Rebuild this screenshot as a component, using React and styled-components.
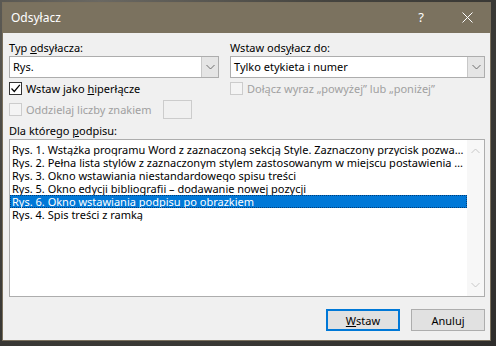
import React from 'react'
import styled, { createGlobalStyle } from 'styled-components'

const GlobalStyle = createGlobalStyle`
  html, body {
    margin: 0;
    padding: 0;
    background: #3b3a37;
  }
  body {
    font-family: "Noto Sans", "Liberation Sans", sans-serif;
    font-size: 11px;
    color: #000;
  }
`

const captions = [
  'Rys. 1. Wstążka programu Word z zaznaczoną sekcją Style. Zaznaczony przycisk pozwala otworzyć okno stylów',
  'Rys. 2. Pełna lista stylów z zaznaczonym stylem zastosowanym w miejscu postawienia kursora',
  'Rys. 3. Okno wstawiania niestandardowego spisu treści',
  'Rys. 5. Okno edycji bibliografii – dodawanie nowej pozycji',
  'Rys. 6. Okno wstawiania podpisu po obrazkiem',
  'Rys. 4. Spis treści z ramką',
]

function Chevron({ up, color = '#606060' }) {
  return (
    <svg width="9" height="6" viewBox="0 0 9 6">
      <path
        d={up ? 'M0.5 5 L4.5 1 L8.5 5' : 'M0.5 1 L4.5 5 L8.5 1'}
        fill="none"
        stroke={color}
        strokeWidth="0.9"
      />
    </svg>
  )
}

function Check() {
  return (
    <svg width="11" height="11" viewBox="0 0 11 11">
      <path d="M1.5 5.5 L4.3 8.5 L9.8 1.8" fill="none" stroke="#000" strokeWidth="1.2" />
    </svg>
  )
}

function App() {
  return (
    <Desktop>
      <GlobalStyle />
      <Window>
        <TitleBar>
          <Title>Odsyłacz</Title>
          <TitleButton>?</TitleButton>
          <TitleButton>
            <svg width="11" height="11" viewBox="0 0 11 11">
              <path d="M0.5 0.5 L10.5 10.5 M10.5 0.5 L0.5 10.5" stroke="#fff" strokeWidth="1" />
            </svg>
          </TitleButton>
        </TitleBar>
        <Body>
          <Columns>
            <Column>
              <Label>Typ <u>o</u>dsyłacza:</Label>
              <Select>
                <SelectValue>Rys.</SelectValue>
                <SelectArrow><Chevron /></SelectArrow>
              </Select>
              <CheckRow>
                <CheckBox><Check /></CheckBox>
                <span>Wstaw jako <u>h</u>iperłącze</span>
              </CheckRow>
              <CheckRow disabled>
                <CheckBox disabled />
                <span>Oddzielaj liczby znakiem</span>
                <SmallInput />
              </CheckRow>
            </Column>
            <Column>
              <Label>Wstaw ods<u>y</u>łacz do:</Label>
              <Select>
                <SelectValue>Tylko etykieta i numer</SelectValue>
                <SelectArrow><Chevron /></SelectArrow>
              </Select>
              <CheckRow disabled>
                <CheckBox disabled />
                <span>Dołącz wyraz „powyżej” lub „poniżej”</span>
              </CheckRow>
            </Column>
          </Columns>
          <ListLabel>Dla którego <u>p</u>odpisu:</ListLabel>
          <ListBox>
            <Rows>
              {captions.map((c, i) => (
                <Row key={i} selected={i === 4}>{c}</Row>
              ))}
            </Rows>
            <ScrollBar>
              <Chevron up color="#c2c2c2" />
              <Chevron color="#c2c2c2" />
            </ScrollBar>
          </ListBox>
          <Buttons>
            <Button primary><u>W</u>staw</Button>
            <Button>Anuluj</Button>
          </Buttons>
        </Body>
      </Window>
    </Desktop>
  )
}

const Desktop = styled.div`
  width: 496px;
  height: 346px;
  box-sizing: border-box;
  padding: 2px 5px 0 2px;
  background: radial-gradient(ellipse at 20% 0%, #6a6862 0%, #45443f 40%, #2e2d2b 100%);
  overflow: hidden;
`

const Window = styled.div`
  width: 489px;
  height: 339px;
  box-sizing: border-box;
  border: 1px solid #7a705d;
  display: flex;
  flex-direction: column;
  background: #f0f0f0;
`

const TitleBar = styled.div`
  height: 30px;
  flex: none;
  background: #7b725f;
  display: flex;
  align-items: center;
  color: #fff;
`

const Title = styled.div`
  flex: 1;
  padding-left: 8px;
  font-size: 12px;
  padding-bottom: 2px;
`

const TitleButton = styled.div`
  width: 46px;
  height: 30px;
  display: flex;
  align-items: center;
  justify-content: center;
  font-size: 13px;
  padding-bottom: 2px;
  box-sizing: border-box;
`

const Body = styled.div`
  flex: 1;
  display: flex;
  flex-direction: column;
  padding: 7px 5px 0 6px;
`

const Columns = styled.div`
  display: grid;
  grid-template-columns: 210px 1fr;
  column-gap: 11px;
`

const Column = styled.div`
  display: flex;
  flex-direction: column;
`

const Label = styled.div`
  height: 15px;
  line-height: 15px;
  margin-bottom: 1px;
`

const Select = styled.div`
  height: 22px;
  box-sizing: border-box;
  border: 1px solid #adadad;
  background: #fff;
  display: flex;
  align-items: stretch;
`

const SelectValue = styled.div`
  flex: 1;
  padding-left: 3px;
  line-height: 19px;
`

const SelectArrow = styled.div`
  width: 16px;
  border-left: 1px solid #c8c8c8;
  background: #e5e5e5;
  display: flex;
  align-items: center;
  justify-content: center;
`

const CheckRow = styled.div`
  display: flex;
  align-items: center;
  gap: 4px;
  height: 21px;
  color: ${p => (p.disabled ? '#a0a0a0' : '#000')};
`

const CheckBox = styled.div`
  width: 13px;
  height: 13px;
  box-sizing: border-box;
  border: 1px solid ${p => (p.disabled ? '#cccccc' : '#333333')};
  background: ${p => (p.disabled ? '#f4f4f4' : '#fff')};
  display: flex;
  align-items: center;
  justify-content: center;
  flex: none;
`

const SmallInput = styled.div`
  width: 29px;
  height: 19px;
  box-sizing: border-box;
  border: 1px solid #cccccc;
  background: #f0f0f0;
  margin-left: auto;
  margin-right: 27px;
`

const ListLabel = styled.div`
  height: 15px;
  line-height: 15px;
  margin-top: 3px;
  margin-bottom: 1px;
`

const ListBox = styled.div`
  height: 158px;
  box-sizing: border-box;
  border: 1px solid #adadad;
  background: #fff;
  display: flex;
`

const Rows = styled.div`
  flex: 1;
  min-width: 0;
  padding-top: 3px;
`

const Row = styled.div`
  height: 13px;
  line-height: 13px;
  padding-left: 2px;
  padding-right: 1px;
  white-space: nowrap;
  overflow: hidden;
  text-overflow: ellipsis;
  box-sizing: border-box;
  background: ${p => (p.selected ? '#0078d7' : 'transparent')};
  color: ${p => (p.selected ? '#fff' : '#000')};
  outline: ${p => (p.selected ? '1px dotted #003e78' : 'none')};
  outline-offset: -1px;
`

const ScrollBar = styled.div`
  width: 17px;
  flex: none;
  background: #f7f7f7;
  display: flex;
  flex-direction: column;
  justify-content: space-between;
  align-items: center;
  padding: 8px 0 8px;
  box-sizing: border-box;
`

const Buttons = styled.div`
  display: flex;
  justify-content: flex-end;
  gap: 11px;
  margin-top: 12px;
`

const Button = styled.div`
  width: 74px;
  height: 22px;
  box-sizing: border-box;
  border: ${p => (p.primary ? '2px solid #0078d7' : '1px solid #adadad')};
  background: #e1e1e1;
  display: flex;
  align-items: center;
  justify-content: center;
`

export default App
